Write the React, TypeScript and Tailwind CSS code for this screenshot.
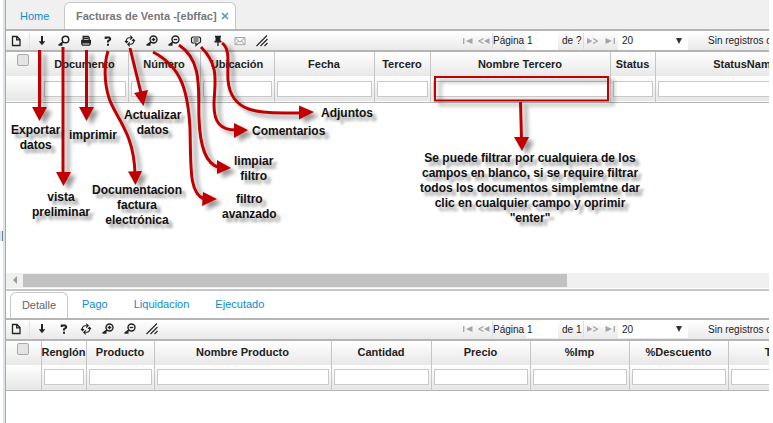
import type { ReactNode } from "react";

type Column = { label: string; width: string };

const documentColumns: Column[] = [
  { label: "Documento", width: "w-[87px]" },
  { label: "Número", width: "w-[72px]" },
  { label: "Ubicación", width: "w-[74px]" },
  { label: "Fecha", width: "w-[100px]" },
  { label: "Tercero", width: "w-[56px]" },
  { label: "Nombre Tercero", width: "w-[180px]" },
  { label: "Status", width: "w-[45px]" },
  { label: "StatusName", width: "w-[180px]" },
];

const detailColumns: Column[] = [
  { label: "Renglón", width: "w-[45px]" },
  { label: "Producto", width: "w-[68px]" },
  { label: "Nombre Producto", width: "w-[177px]" },
  { label: "Cantidad", width: "w-[100px]" },
  { label: "Precio", width: "w-[99px]" },
  { label: "%Imp", width: "w-[99px]" },
  { label: "%Descuento", width: "w-[99px]" },
  { label: "Total", width: "w-[99px]" },
];

const icons: Record<string, ReactNode> = {
  Nuevo: <path d="M2.500 2.500h4.500l3 3v6H2.500zM6.700 2.500v3.300H10" strokeWidth="1.300" />,
  Exportar: (
    <>
      <path d="M7 2v6" strokeWidth="2" />
      <path d="M3.700 7.200h6.600L7 11.300z" fill="currentColor" stroke="none" />
    </>
  ),
  "Vista preliminar": (
    <>
      <circle cx="8.500" cy="5.500" r="3.300" strokeWidth="1.500" />
      <path d="M6.200 8 2.500 10.800M1.500 10.800h4" strokeWidth="1.700" />
    </>
  ),
  Imprimir: (
    <>
      <path d="M4.200 6V2.500h5l1 1V6M4.500 4.400h4.800" />
      <path d="M2.800 6.500h8.600v2.300H2.800z" fill="currentColor" />
      <path d="M3 11.200h8M3 9v2M11 9v2" />
    </>
  ),
  Ayuda: (
    <>
      <path d="M4.700 5V3.500h3.600l.8 1v1L7 7.300v1.200" strokeWidth="2" />
      <path d="M6 9.800h2v2H6z" fill="currentColor" stroke="none" />
    </>
  ),
  Actualizar: (
    <path d="M8.500 3.700H6A3 3 0 0 0 3.600 8M7.200 1.700l2 2-2 2M5.500 10.300H8A3 3 0 0 0 10.400 6M6.800 8.300l-2 2 2 2M2 7l1.600 1.700L5 7M9 7l1.400-1.600L12 7" strokeWidth="1.100" />
  ),
  "Filtro avanzado": (
    <>
      <circle cx="8.500" cy="5.500" r="3.500" strokeWidth="1.400" />
      <path d="M6.200 8 2.500 10.800M1.500 10.800h4" strokeWidth="1.700" />
      <path d="M6.700 5.500h3.600M8.500 3.700v3.600" />
    </>
  ),
  "Limpiar filtro": (
    <>
      <circle cx="8.500" cy="5.500" r="3.500" strokeWidth="1.400" />
      <path d="M6.200 8 2.500 10.800M1.500 10.800h4" strokeWidth="1.700" />
      <path d="M6.700 5.500h3.600" />
    </>
  ),
  Comentarios: (
    <path d="M3.500 3h7l1 1v4l-1 1H9.500L7 11.500V9H3.500l-1-1V4zM4.500 5h5M4.500 7h5" strokeWidth="1.200" />
  ),
  Adjuntos: (
    <>
      <path d="M4 2.500h6M5.300 2.500h3.400V7H5.300zM3.500 7.600h7" fill="currentColor" strokeWidth="1.600" />
      <path d="M7 8v4" />
    </>
  ),
  Correo: <path d="M2 3.500h10v7.200H2zM2.300 4 7 8l4.700-4M2.300 10.500 5.500 7M11.700 10.500 8.500 7" stroke="#a8a8a8" strokeWidth="1" />,
  Redimensionar: <path d="M1.500 12 12 1.500M5.500 12l7-7M9.500 12l3-3" strokeWidth="1.100" />,
};

function ToolButton({ name }: { name: string }) {
  return (
    <button type="button" aria-label={name} className="flex h-[18px] w-[22px] shrink-0 items-center justify-center text-[#222]">
      <svg width="14" height="14" viewBox="0 0 14 14" fill="none" stroke="currentColor" strokeWidth="1.300">
        {icons[name]}
      </svg>
    </button>
  );
}

function PagerButton({ name, d, bar }: { name: string; d: string; bar: string }) {
  return (
    <button type="button" aria-label={name} className="flex h-[18px] w-4 shrink-0 items-center justify-center text-[#a5a5a5]">
      <svg width="12" height="10" viewBox="0 0 12 10">
        <path d={d} fill="currentColor" />
        <path d={bar} fill="none" stroke="currentColor" strokeWidth="1.300" />
      </svg>
    </button>
  );
}

function Toolbar({ tools, pages, id }: { tools: string[]; pages: string; id: string }) {
  return (
    <div className="flex h-[23px] items-center overflow-hidden border-y-2 border-[#b5b5b5] bg-linear-to-b from-white to-[#e9e9e9] text-[10px] whitespace-nowrap text-[#222]">
      <div className="flex w-[454px] shrink-0 items-center">
        <ToolButton name="Nuevo" />
        <span className="mx-px h-4 w-px bg-[#e2e2e2]" />
        {tools.map((tool) => (
          <ToolButton key={tool} name={tool} />
        ))}
      </div>
      <PagerButton name="Primera página" d="M10.500 2v6L4 5z" bar="M1.700 2v6" />
      <PagerButton name="Página anterior" d="M11.500 2v6L6 5z" bar="M5.500 2.500 1 5l4.500 2.500" />
      <span className="h-4 w-px shrink-0 bg-[#ddd]" />
      <label htmlFor={`${id}-page`} className="w-8 shrink-0">Página</label>
      <input id={`${id}-page`} defaultValue="1" className="ml-px h-[18px] w-8 shrink-0 bg-white px-px outline-none" />
      <span className="ml-1 w-[21px] shrink-0">de {pages}</span>
      <span className="h-4 w-px shrink-0 bg-[#ddd]" />
      <div className="flex w-[34px] shrink-0 justify-between">
        <PagerButton name="Página siguiente" d="M1 2v6L6.500 5z" bar="M7 2.500 11.500 5 7 7.500" />
        <PagerButton name="Última página" d="M1.500 2v6L8 5z" bar="M10.300 2v6" />
      </div>
      <div className="relative h-[18px] w-[70px] shrink-0 bg-white">
        <select aria-label="Registros por página" defaultValue="20" className="h-full w-full appearance-none pl-1 outline-none">
          <option>20</option>
          <option>50</option>
          <option>100</option>
        </select>
        <svg className="pointer-events-none absolute top-1.5 right-1.5" width="6" height="6" viewBox="0 0 6 6">
          <path d="M0 0h6L3 6z" fill="#333" />
        </svg>
      </div>
      <span className="ml-5">Sin registros disponibles</span>
    </div>
  );
}

function Grid({ columns, id, width }: { columns: Column[]; id: string; width: string }) {
  return (
    <div className="overflow-hidden">
      <table className={`${width} table-fixed border-collapse text-[11px] text-[#222]`}>
        <colgroup>
          <col className="w-[35px]" />
          {columns.map((column) => (
            <col key={column.label} className={column.width} />
          ))}
        </colgroup>
        <thead>
          <tr className="h-6 bg-linear-to-b from-white to-[#e8e8e8]">
            <th className="border-r border-[#c5c5c5] p-0 align-top">
              <input
                type="checkbox"
                aria-label="Seleccionar todo"
                className="mt-[2px] ml-[11px] block size-3 appearance-none rounded-xs border border-[#aaa] bg-[#e4e4e4]"
              />
            </th>
            {columns.map((column) => (
              <th key={column.label} id={`${id}-${column.label}`} className="border-r border-[#c5c5c5] p-0 font-bold whitespace-nowrap">
                {column.label}
              </th>
            ))}
          </tr>
          <tr className="h-[26px] border-b border-[#b5b5b5] bg-linear-to-b from-white to-[#e6e6e6]">
            <td className="border-r border-[#c5c5c5]" />
            {columns.map((column) => (
              <td key={column.label} className="border-r border-[#c5c5c5] px-[2px] py-0">
                <input
                  aria-labelledby={`${id}-${column.label}`}
                  className="block h-4 w-full border border-[#c8c8c8] bg-white px-1 outline-none"
                />
              </td>
            ))}
          </tr>
        </thead>
      </table>
    </div>
  );
}

const arrows = [
  { line: "M39.500 50V110", head: "M32 107h15l-7.500 14z" },
  { line: "M63 47V175", head: "M56 172h15l-7.500 14z" },
  { line: "M86.500 50V110", head: "M79 107h15l-7.500 14z" },
  { line: "M108 51C104 64 104 82 109 98C115 117 134 132 135 174", head: "M128 171.500l14-.500-6.500 14z" },
  { line: "M130 48L141 93", head: "M134 93l14-3-4.500 16z" },
  { line: "M153 52C182 67 188 92 190 128C191 168 189 193 204 199", head: "M203 192l14 7-15 7z" },
  { line: "M179 45C203 61 198 91 199 118C200 148 206 164 219 167.500", head: "M217 160l14 8-14 6z" },
  { line: "M201 47C221 67 214 85 214 105C214 122 220 130 236 130", head: "M234 123l14 7-14 8z" },
  { line: "M222 43C231 49 227 66 228 80C231 115 261 113 301 113", head: "M299 105.500l15 6.500-15 7.500z" },
  { line: "M520.500 102L521.500 139", head: "M514 137h15l-7 14z" },
];

const notes: { place: string; text: string[] }[] = [
  { place: "left-[11px] top-[123px]", text: ["Exportar", "datos"] },
  { place: "left-[69px] top-[128px]", text: ["imprimir"] },
  { place: "left-[124px] top-[108px]", text: ["Actualizar", "datos"] },
  { place: "left-[32px] top-[190px]", text: ["vista", "preliminar"] },
  { place: "left-[92px] top-[183px]", text: ["Documentacion", "factura", "electrónica"] },
  { place: "left-[321px] top-[106px]", text: ["Adjuntos"] },
  { place: "left-[252px] top-[124px]", text: ["Comentarios"] },
  { place: "left-[234px] top-[154px]", text: ["limpiar", "filtro"] },
  { place: "left-[222px] top-[192px]", text: ["filtro", "avanzado"] },
  {
    place: "left-[420px] top-[151px]",
    text: [
      "Se puede filtrar por cualquiera de los",
      "campos en blanco, si se require filtrar",
      "todos los documentos simplemtne dar",
      "clic en cualquier campo y oprimir",
      "\"enter\"",
    ],
  },
];

function Annotations() {
  return (
    <div className="pointer-events-none absolute inset-0 overflow-hidden">
      <svg
        className="absolute top-0 left-0 drop-shadow-[5px_4px_2px_rgba(0,0,0,0.4)]"
        width="773"
        height="260"
        viewBox="0 0 773 260"
        fill="none"
      >
        <rect x="435" y="77" width="173" height="23.500" stroke="#c00000" strokeWidth="2" />
        {arrows.map((arrow) => (
          <g key={arrow.line}>
            <path d={arrow.line} stroke="#c00000" strokeWidth="3" />
            <path d={arrow.head} fill="#c00000" />
          </g>
        ))}
      </svg>
      {notes.map((note) => (
        <p
          key={note.text[0]}
          className={`absolute ${note.place} text-center text-xs leading-[15px] font-bold whitespace-nowrap text-[#111] [text-shadow:4px_4px_3px_rgba(0,0,0,0.4)]`}
        >
          {note.text.map((line) => (
            <span key={line} className="block">
              {line}
            </span>
          ))}
        </p>
      ))}
    </div>
  );
}

export default function App() {
  return (
    <div className="relative flex min-h-screen overflow-hidden bg-white pr-1 font-['Liberation_Sans',Arial,sans-serif]">
      <div className="flex w-[5px] shrink-0 items-center border-r-2 border-[#dde3ea] pt-12">
        <span className="h-2.5 w-[3px] border-r border-[#6b7f95] bg-[#dbe3ec]" />
      </div>
      <main className="min-w-0 flex-1 border-l border-[#aaa]">
        <nav className="flex h-[29px] items-end bg-[#f0f0f0] text-[11px]">
          <a href="#home" className="w-[58px] pb-[5px] pl-[14px] text-[#0d8bd0]">
            Home
          </a>
          <div className="flex h-[27px] items-center gap-1 rounded-t-md border border-b-0 border-[#c8c8c8] bg-white pr-1.5 pl-[11px] font-bold text-[#777]">
            <a href="#facturas">Facturas de Venta -[ebffac]</a>
            <button type="button" aria-label="Cerrar" className="text-[#5b8fc4]">
              <svg width="8" height="8" viewBox="0 0 8 8" stroke="currentColor" strokeWidth="1.500">
                <path d="M1 1l6 6M7 1L1 7" />
              </svg>
            </button>
          </div>
        </nav>
        <Toolbar
          id="documentos"
          pages="?"
          tools={["Exportar", "Vista preliminar", "Imprimir", "Ayuda", "Actualizar", "Filtro avanzado", "Limpiar filtro", "Comentarios", "Adjuntos", "Correo", "Redimensionar"]}
        />
        <Grid id="documentos" columns={documentColumns} width="w-[829px]" />
        <div className="h-[170px]" />
        <div className="flex h-[15px] items-center bg-[#f0f0f0]">
          <div className="flex w-[17px] shrink-0 justify-center">
            <svg width="4" height="8" viewBox="0 0 4 8">
              <path d="M4 0v8L0 4z" fill="#999" />
            </svg>
          </div>
          <div className="h-[13px] w-[544px] bg-[#c1c1c1]" />
        </div>
        <nav className="mt-px flex h-[29px] items-end border-t-2 border-[#c5c5c5] text-[11px] text-[#0d8bd0]">
          <a href="#detalle" className="ml-1 flex h-[26px] w-[58px] items-center justify-center rounded-t-md border border-b-0 border-[#c8c8c8] text-[#666]">
            Detalle
          </a>
          <a href="#pago" className="ml-[14px] pb-[5px]">Pago</a>
          <a href="#liquidacion" className="ml-[26px] pb-[5px]">Liquidacion</a>
          <a href="#ejecutado" className="ml-[26px] pb-[5px]">Ejecutado</a>
        </nav>
        <Toolbar
          id="detalle"
          pages="1"
          tools={["Exportar", "Ayuda", "Actualizar", "Filtro avanzado", "Limpiar filtro", "Redimensionar"]}
        />
        <Grid id="detalle" columns={detailColumns} width="w-[821px]" />
      </main>
      <Annotations />
    </div>
  );
}
